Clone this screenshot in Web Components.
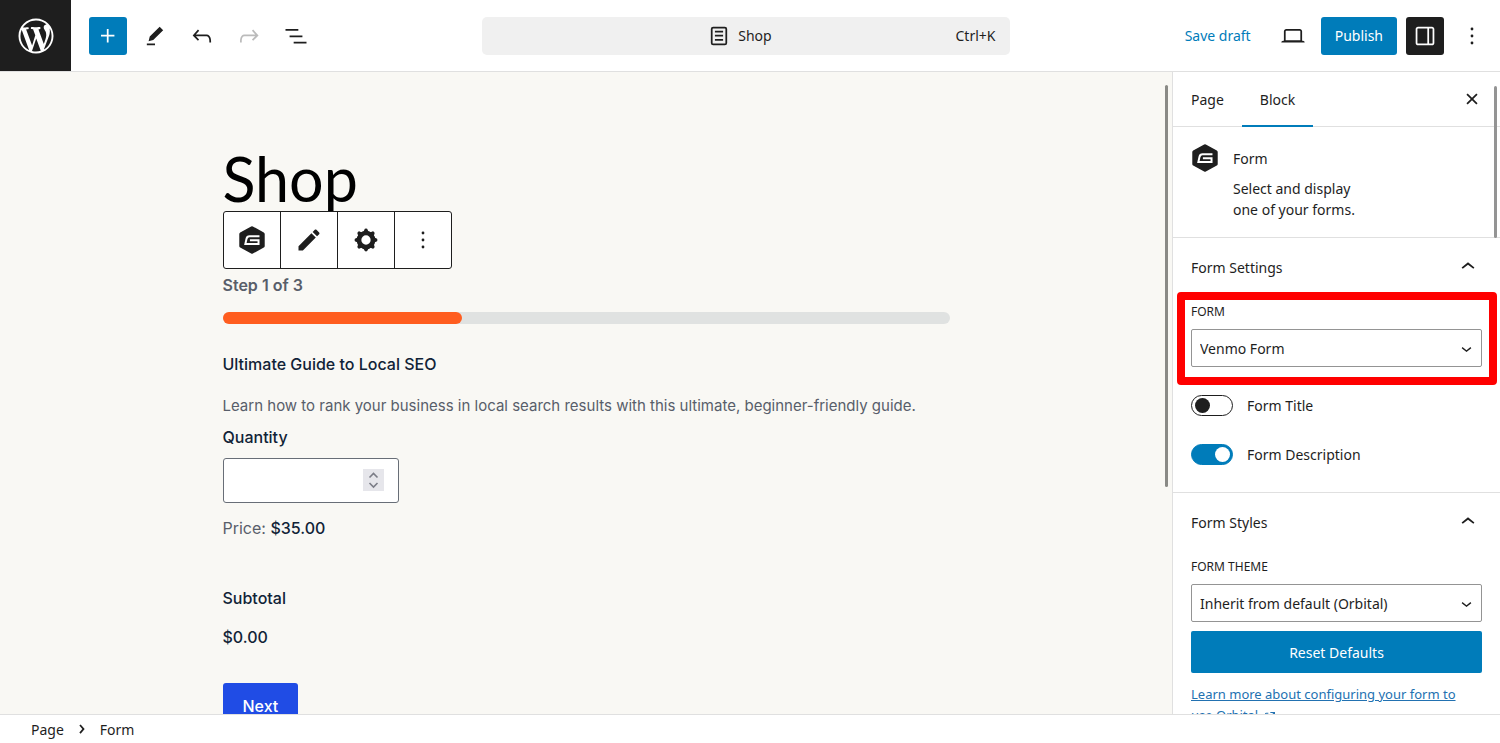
<!DOCTYPE html>
<html lang="en">
<head>
<meta charset="utf-8">
<meta name="viewport" content="width=device-width, initial-scale=1">
<title>Shop</title>
<style>
  * { box-sizing: border-box; }
  body {
    margin: 0;
    font-family: "Noto Sans", sans-serif;
    font-size: 14px;
    line-height: 21px;
    color: #1e1e1e;
    background: #fff;
    --blue: #007cba;
    --line: #e0e0e0;
    --canvas: #f9f8f4;
  }
</style>
</head>
<body>
<editor-shell>
  <editor-header slot="header"></editor-header>
  <editor-canvas slot="canvas">
    <block-toolbar slot="toolbar"></block-toolbar>
    <order-form></order-form>
  </editor-canvas>
  <editor-sidebar slot="sidebar">
    <block-card icon="gravity" name="Form">Select and display one of your forms.</block-card>
    <panel-body heading="Form Settings">
      <select-control label="Form" value="Venmo Form" highlight></select-control>
      <toggle-control label="Form Title"></toggle-control>
      <toggle-control label="Form Description" checked></toggle-control>
    </panel-body>
    <panel-body heading="Form Styles">
      <select-control label="Form Theme" value="Inherit from default (Orbital)"></select-control>
      <theme-actions></theme-actions>
    </panel-body>
  </editor-sidebar>
  <editor-breadcrumb slot="footer"></editor-breadcrumb>
</editor-shell>

<script>
/* Icon shapes, drawn on a 24 unit grid */
const ICONS = {
  wordpress: '<g transform="translate(2 2)"><path d="M20 10c0-5.51-4.49-10-10-10C4.48 0 0 4.49 0 10c0 5.52 4.48 10 10 10 5.51 0 10-4.48 10-10zM7.78 15.37L4.37 6.22c.55-.02 1.17-.08 1.17-.08.5-.06.44-1.13-.06-1.11 0 0-1.45.11-2.37.11-.18 0-.37 0-.58-.01C4.12 2.69 6.87 1.11 10 1.11c2.33 0 4.45.87 6.05 2.34-.68-.11-1.65.39-1.65 1.58 0 .74.45 1.36.9 2.1.35.61.55 1.36.55 2.46 0 1.49-1.4 5-1.4 5l-3.03-8.37c.54-.02.82-.17.82-.17.5-.05.44-1.25-.06-1.22 0 0-1.44.12-2.38.12-.87 0-2.33-.12-2.33-.12-.5-.03-.56 1.2-.06 1.22l.92.08 1.26 3.41zM17.41 10c.24-.64.74-1.87.43-4.25.7 1.29 1.05 2.71 1.05 4.25 0 3.29-1.73 6.24-4.4 7.78.97-2.59 1.94-5.2 2.92-7.78zM6.1 18.09C3.12 16.65 1.11 13.53 1.11 10c0-1.3.23-2.48.72-3.59C3.25 10.3 4.67 14.2 6.1 18.09zm4.03-6.63l2.58 6.98c-.86.29-1.76.45-2.71.45-.79 0-1.57-.11-2.29-.33.81-2.38 1.62-4.74 2.42-7.1z"/></g>',
  plus: '<path d="M11 12.5V17.5H12.5V12.5H17.5V11H12.5V6H11V11H6V12.5H11Z"/>',
  tools: '<path d="m19 7-3-3-8.5 8.5-1 4 4-1L19 7Zm-7 11.5H5V20h7v-1.5Z"/>',
  undo: '<path d="M18.3 11.7c-.6-.6-1.4-.9-2.3-.9H6.7l2.9-3.3-1.1-1-4.5 5L8.5 16l1-1-2.7-2.7H16c.5 0 .9.2 1.3.5 1 1 1 3.4 1 4.5v.3h1.5v-.2c0-1.5 0-4.3-1.5-5.7z"/>',
  redo: '<path d="M15.6 6.5l-1.1 1 2.9 3.3H8c-.9 0-1.7.3-2.3.9-1.4 1.5-1.4 4.2-1.4 5.6v.2h1.5v-.3c0-1.1 0-3.5 1-4.5.3-.3.7-.5 1.3-.5h9.2L14.5 15l1.1 1.1 4.6-4.6-4.6-5z"/>',
  list: '<path d="M3 6h11v1.5H3V6Zm3.5 5.5h11V13h-11v-1.5ZM21 17H10v1.5h11V17Z"/>',
  page: '<path d="M15.5 7.5h-7V9h7V7.5Zm-7 3.5h7v1.5h-7V11Zm7 3.5h-7V16h7v-1.5Z"/><path fill-rule="evenodd" d="M17 4H7a2 2 0 0 0-2 2v12a2 2 0 0 0 2 2h10a2 2 0 0 0 2-2V6a2 2 0 0 0-2-2ZM7 5.5h10a.5.5 0 0 1 .5.5v12a.5.5 0 0 1-.5.5H7a.5.5 0 0 1-.5-.5V6a.5.5 0 0 1 .5-.5Z"/>',
  laptop: '<path d="M20.5 16h-.7V8c0-1.1-.9-2-2-2H6.2c-1.1 0-2 .9-2 2v8h-.7c-.8 0-1.5.7-1.5 1.5h20c0-.8-.7-1.5-1.5-1.5zM5.7 8c0-.3.2-.5.5-.5h11.6c.3 0 .5.2.5.5v7.6H5.7V8z"/>',
  drawer: '<path fill-rule="evenodd" d="M18 4H6c-1.1 0-2 .9-2 2v12c0 1.1.9 2 2 2h12c1.1 0 2-.9 2-2V6c0-1.1-.9-2-2-2zm-4 14.5H6c-.3 0-.5-.2-.5-.5V6c0-.3.2-.5.5-.5h8v13zm4.5-.5c0 .3-.2.5-.5.5h-2.5v-13H18c.3 0 .5.2.5.5v12z"/>',
  more: '<circle cx="12" cy="6" r="1.2"/><circle cx="12" cy="12" r="1.2"/><circle cx="12" cy="18" r="1.2"/>',
  close: '<path d="M12 13.06l3.712 3.713 1.061-1.06L13.061 12l3.712-3.712-1.06-1.06L12 10.938 8.288 7.227l-1.061 1.06L10.939 12l-3.712 3.712 1.06 1.061L12 13.061z"/>',
  up: '<path d="M6.5 12.4L12 8l5.5 4.4-.9 1.2L12 10l-4.5 3.6-1-1.2z"/>',
  down: '<path d="M17.5 11.6L12 16l-5.5-4.4.9-1.2L12 14l4.5-3.6 1 1.2z"/>',
  right: '<path d="M10.8622 8.04053L14.2805 12.0286L10.8622 16.0167L9.72327 15.0405L12.3049 12.0286L9.72327 9.01672L10.8622 8.04053Z"/>',
  pencil: '<path d="M3 17.25V21h3.75L17.81 9.94l-3.75-3.75L3 17.25zM20.71 7.04c.39-.39.39-1.02 0-1.41l-2.34-2.34c-.39-.39-1.02-.39-1.41 0l-1.83 1.83 3.75 3.75 1.83-1.83z"/>',
  gear: '<circle cx="12" cy="12" r="6" fill="none" stroke="currentColor" stroke-width="4"/>' +
    [0, 45, 90, 135, 180, 225, 270, 315].map((a) =>
      `<path transform="rotate(${a} 12 12)" d="M9 5.2Q10.3 4.6 10.5 3.4Q10.8 2.2 12 2.2T13.5 3.4Q13.7 4.6 15 5.2Z"/>`).join(''),
  gravity: '<path stroke="currentColor" stroke-width="3" stroke-linejoin="round" d="M12 1.7L21.4 6.9V17.1L12 22.3L2.6 17.1V6.9Z"/><path fill="none" stroke="#fff" stroke-width="1.7" d="M18.4 8.8H9.8Q7.8 8.8 7.3 10.9L6.3 15.5H17.6V12.2H10.2"/>',
  external: '<path d="M19.5 4.5h-7V6h4.44l-5.97 5.97 1.06 1.06L18 7.06v4.44h1.5v-7Zm-13 1a2 2 0 0 0-2 2v10a2 2 0 0 0 2 2h10a2 2 0 0 0 2-2v-3H17v3a.5.5 0 0 1-.5.5h-10a.5.5 0 0 1-.5-.5v-10a.5.5 0 0 1 .5-.5h3V5.5h-3Z"/>'
};

const RESET = `
  * { box-sizing: border-box; margin: 0; }
  button, input, select { font: inherit; color: inherit; }
  button { border: 0; padding: 0; background: none; cursor: pointer; }
`;

/* Base class: renders template() into an open shadow root */
class UiElement extends HTMLElement {
  constructor() {
    super();
    this.attachShadow({ mode: 'open' });
  }

  connectedCallback() {
    this.shadowRoot.innerHTML = `<style>${RESET}${this.styles()}</style>${this.template()}`;
  }

  attr(name) { return this.getAttribute(name) || ''; }
}

class UiIcon extends UiElement {
  styles() {
    const size = this.attr('size') || '28';
    return `
      :host { display: inline-block; flex: none; width: ${size}px; height: ${size}px; }
      svg { display: block; width: 100%; height: 100%; fill: currentColor; }`;
  }

  template() {
    return `<svg viewBox="0 0 24 24" aria-hidden="true">${ICONS[this.attr('name')]}</svg>`;
  }
}

class EditorShell extends UiElement {
  styles() {
    return `
      :host {
        display: grid;
        grid-template: auto minmax(0, 1fr) auto / minmax(0, 1fr) 328px;
        height: 100vh;
        overflow: hidden;
      }
      slot[name=header]::slotted(*), slot[name=footer]::slotted(*) { grid-column: 1 / -1; }`;
  }

  template() {
    return `<slot name="header"></slot><slot name="canvas"></slot>
      <slot name="sidebar"></slot><slot name="footer"></slot>`;
  }
}

class EditorHeader extends UiElement {
  styles() {
    return `
      :host {
        display: grid;
        grid-template-columns: 1fr minmax(0, 528px) 1fr;
        align-items: center;
        padding-right: 9px;
        border-bottom: 1px solid var(--line);
        background: #fff;
      }
      .left, .right { display: flex; align-items: center; gap: 9px; }
      .right { justify-content: flex-end; }
      .logo {
        display: grid;
        place-items: center;
        width: 71px;
        height: 71px;
        margin-right: 9px;
        background: #1e1e1e;
        color: #fff;
      }
      .tool {
        display: grid;
        place-items: center;
        width: 38px;
        height: 38px;
        border-radius: 3px;
      }
      .add, .publish { background: var(--blue); color: #fff; }
      .dark { background: #1e1e1e; color: #fff; }
      .tool:disabled { color: #bbb; }
      .search {
        display: grid;
        grid-template-columns: 1fr auto 1fr;
        align-items: center;
        height: 38px;
        padding: 0 14px;
        border-radius: 5px;
        background: #f0f0f0;
      }
      .title { display: flex; align-items: center; gap: 5px; grid-column: 2; padding-right: 14px; }
      .keys { justify-self: end; }
      .save { color: var(--blue); margin-right: 14px; }
      .publish { height: 38px; padding: 0 14px; border-radius: 3px; }`;
  }

  template() {
    return `
      <div class="left">
        <a class="logo" href="#" aria-label="View Pages"><ui-icon name="wordpress" size="42"></ui-icon></a>
        <button class="tool add" aria-label="Add block"><ui-icon name="plus"></ui-icon></button>
        <button class="tool" aria-label="Tools"><ui-icon name="tools"></ui-icon></button>
        <button class="tool" aria-label="Undo"><ui-icon name="undo"></ui-icon></button>
        <button class="tool" aria-label="Redo" disabled><ui-icon name="redo"></ui-icon></button>
        <button class="tool" aria-label="Document Overview"><ui-icon name="list"></ui-icon></button>
      </div>
      <button class="search">
        <span class="title"><ui-icon name="page"></ui-icon>Shop</span>
        <span class="keys">Ctrl+K</span>
      </button>
      <div class="right">
        <button class="save">Save draft</button>
        <button class="tool" aria-label="View"><ui-icon name="laptop"></ui-icon></button>
        <button class="publish">Publish</button>
        <button class="tool dark" aria-label="Settings"><ui-icon name="drawer"></ui-icon></button>
        <button class="tool" aria-label="Options"><ui-icon name="more"></ui-icon></button>
      </div>`;
  }
}

class EditorCanvas extends UiElement {
  styles() {
    return `
      :host {
        display: block;
        position: relative;
        overflow: hidden;
        padding: 71px 40px 0;
        background: var(--canvas);
        font-family: Inter, sans-serif;
        font-size: 16px;
        line-height: 24px;
      }
      .content { max-width: 727px; margin: 0 auto; }
      /* the block toolbar covers the descender of the title */
      h1 {
        height: 68px;
        font: 400 61px/72px Lato, sans-serif;
        color: #000;
      }
      /* scrollbar thumb */
      .thumb {
        position: absolute;
        top: 13px;
        right: 4px;
        width: 3px;
        height: 402px;
        border-radius: 2px;
        background: #8a8a86;
      }`;
  }

  template() {
    return `
      <div class="content">
        <h1>Shop</h1>
        <slot name="toolbar"></slot>
        <slot></slot>
      </div>
      <div class="thumb"></div>`;
  }
}

class BlockToolbar extends UiElement {
  styles() {
    return `
      :host {
        display: flex;
        position: relative;
        width: max-content;
        border: 1px solid #1e1e1e;
        border-radius: 3px;
        background: #fff;
        color: #1e1e1e;
      }
      button { display: grid; place-items: center; width: 57px; height: 56px; }
      button + button { border-left: 1px solid #1e1e1e; }
      button:first-of-type { width: 56px; }`;
  }

  template() {
    return `
      <button aria-label="Form"><ui-icon name="gravity"></ui-icon></button>
      <button aria-label="Edit Form"><ui-icon name="pencil"></ui-icon></button>
      <button aria-label="Form Settings"><ui-icon name="gear"></ui-icon></button>
      <button aria-label="Options"><ui-icon name="more"></ui-icon></button>`;
  }
}

class OrderForm extends UiElement {
  styles() {
    return `
      :host { display: block; color: #112337; }
      .step { margin-top: 4px; font-weight: 600; color: #585e6a; }
      .bar { height: 12px; margin-top: 15px; border-radius: 6px; background: #e0e2e1; }
      .fill { width: 33%; height: 100%; border-radius: 6px; background: #ff5d1f; }
      h2, label, .label { display: block; font-size: 16px; font-weight: 500; }
      h2 { margin-top: 28px; }
      .desc { margin-top: 18px; font-size: 15px; color: #585e6a; }
      label { margin-top: 7px; }
      .number { position: relative; width: 176px; margin-top: 9px; }
      input {
        display: block;
        width: 100%;
        height: 45px;
        padding: 0 40px 0 12px;
        border: 1px solid #686e77;
        border-radius: 3px;
        background: #fff;
        appearance: textfield;
      }
      .spin {
        position: absolute;
        top: 11px;
        right: 15px;
        width: 21px;
        height: 22px;
        background: #e6e6eb;
        fill: none;
        stroke: #7b7d87;
        stroke-width: 1.6;
      }
      .price { margin-top: 13px; color: #585e6a; }
      .price b { font-weight: 500; color: #112337; }
      .label { margin-top: 46px; }
      .total { margin-top: 15px; font-weight: 500; }
      .next {
        height: 45px;
        margin-top: 34px;
        padding: 0 20px;
        border-radius: 3px;
        background: #204ce5;
        color: #fff;
        font-weight: 500;
      }`;
  }

  template() {
    return `
      <p class="step">Step 1 of 3</p>
      <div class="bar"><div class="fill"></div></div>
      <h2>Ultimate Guide to Local SEO</h2>
      <p class="desc">Learn how to rank your business in local search results with this ultimate, beginner-friendly guide.</p>
      <label for="quantity">Quantity</label>
      <div class="number">
        <input id="quantity" type="number" min="0">
        <svg class="spin" viewBox="0 0 21 22" aria-hidden="true"><path d="M6.5 8.5L10.5 4.5L14.5 8.5M6.5 14L10.5 18L14.5 14"/></svg>
      </div>
      <p class="price">Price: <b>$35.00</b></p>
      <p class="label">Subtotal</p>
      <p class="total">$0.00</p>
      <button class="next">Next</button>`;
  }
}

class EditorSidebar extends UiElement {
  styles() {
    return `
      :host {
        display: block;
        position: relative;
        overflow: hidden;
        border-left: 1px solid var(--line);
        background: #fff;
      }
      .tabs {
        display: flex;
        align-items: center;
        height: 55px;
        padding-right: 11px;
        border-bottom: 1px solid var(--line);
      }
      .tab { height: 55px; padding: 2px 18px 0; border-bottom: 2px solid transparent; }
      .tab[aria-selected=true] { border-color: var(--blue); }
      .close { display: grid; place-items: center; width: 34px; height: 38px; margin-left: auto; }
      /* scrollbar thumb */
      .thumb {
        position: absolute;
        top: 14px;
        right: 3px;
        width: 3px;
        height: 152px;
        border-radius: 2px;
        background: #949494;
      }`;
  }

  template() {
    return `
      <div class="tabs" role="tablist">
        <button class="tab" role="tab" aria-selected="false">Page</button>
        <button class="tab" role="tab" aria-selected="true">Block</button>
        <button class="close" aria-label="Close Settings"><ui-icon name="close"></ui-icon></button>
      </div>
      <slot></slot>
      <div class="thumb"></div>`;
  }
}

class BlockCard extends UiElement {
  styles() {
    return `
      :host {
        display: flex;
        gap: 14px;
        padding: 17px 18px 12px;
        border-bottom: 1px solid var(--line);
      }
      .text { max-width: 142px; padding: 4px 0 5px; }
      h2 { font-size: 14px; font-weight: 400; margin-bottom: 9px; }`;
  }

  template() {
    return `
      <ui-icon name="${this.attr('icon')}"></ui-icon>
      <div class="text"><h2>${this.attr('name')}</h2><p><slot></slot></p></div>`;
  }
}

class PanelBody extends UiElement {
  styles() {
    return `
      :host { display: block; padding: 0 18px 27px; border-bottom: 1px solid var(--line); }
      h2 { font: inherit; }
      button {
        display: flex;
        align-items: center;
        justify-content: space-between;
        width: 100%;
        height: 58px;
      }`;
  }

  template() {
    return `
      <h2><button aria-expanded="true">${this.attr('heading')}<ui-icon name="up"></ui-icon></button></h2>
      <slot></slot>`;
  }
}

class SelectControl extends UiElement {
  styles() {
    return `
      :host { display: block; position: relative; padding-top: 7px; }
      label { display: block; font-size: 12px; line-height: 18px; text-transform: uppercase; }
      .field { display: grid; align-items: center; margin-top: 8px; }
      select, ui-icon { grid-area: 1 / 1; }
      select {
        width: 100%;
        height: 38px;
        padding: 0 30px 0 8px;
        border: 1px solid #949494;
        border-radius: 2px;
        background: #fff;
        appearance: none;
      }
      ui-icon { justify-self: end; margin-right: 5px; pointer-events: none; }
      /* red frame laid over the control */
      :host([highlight])::after {
        content: "";
        position: absolute;
        inset: -4px -15px -18px -14px;
        border: 8px solid #f00;
        border-radius: 4px;
        pointer-events: none;
      }`;
  }

  template() {
    return `
      <label for="choice">${this.attr('label')}</label>
      <div class="field">
        <select id="choice"><option>${this.attr('value')}</option></select>
        <ui-icon name="down" size="21"></ui-icon>
      </div>`;
  }
}

class ToggleControl extends UiElement {
  styles() {
    return `
      :host { display: flex; align-items: center; gap: 14px; margin-top: 28px; }
      input {
        width: 42px;
        height: 21px;
        border: 1px solid #1e1e1e;
        border-radius: 11px;
        background: #fff;
        appearance: none;
      }
      input::before {
        content: "";
        display: block;
        width: 15px;
        height: 15px;
        margin: 2px 3px;
        border-radius: 50%;
        background: #1e1e1e;
      }
      input:checked { border-color: var(--blue); background: var(--blue); }
      input:checked::before { margin-left: 23px; background: #fff; }`;
  }

  template() {
    return `
      <input id="toggle" type="checkbox" ${this.hasAttribute('checked') ? 'checked' : ''}>
      <label for="toggle">${this.attr('label')}</label>`;
  }
}

class ThemeActions extends UiElement {
  styles() {
    return `
      :host { display: block; }
      button {
        width: 100%;
        height: 42px;
        margin: 9px 0 11px;
        border-radius: 2px;
        background: var(--blue);
        color: #fff;
      }
      p { padding-right: 14px; font-size: 13px; }
      a { color: #2271b1; }
      ui-icon { vertical-align: middle; }`;
  }

  template() {
    return `
      <button>Reset Defaults</button>
      <p><a href="#">Learn more about configuring your form to use Orbital.<ui-icon name="external" size="16"></ui-icon></a></p>`;
  }
}

class EditorBreadcrumb extends UiElement {
  styles() {
    return `
      :host { display: block; border-top: 1px solid var(--line); background: #fff; }
      nav { display: flex; align-items: center; gap: 4px; height: 28px; padding: 0 31px; }`;
  }

  template() {
    return `
      <nav aria-label="Block breadcrumb">
        <button>Page</button>
        <ui-icon name="right"></ui-icon>
        <span>Form</span>
      </nav>`;
  }
}

customElements.define('ui-icon', UiIcon);
customElements.define('editor-shell', EditorShell);
customElements.define('editor-header', EditorHeader);
customElements.define('editor-canvas', EditorCanvas);
customElements.define('block-toolbar', BlockToolbar);
customElements.define('order-form', OrderForm);
customElements.define('editor-sidebar', EditorSidebar);
customElements.define('block-card', BlockCard);
customElements.define('panel-body', PanelBody);
customElements.define('select-control', SelectControl);
customElements.define('toggle-control', ToggleControl);
customElements.define('theme-actions', ThemeActions);
customElements.define('editor-breadcrumb', EditorBreadcrumb);
</script>
</body>
</html>
